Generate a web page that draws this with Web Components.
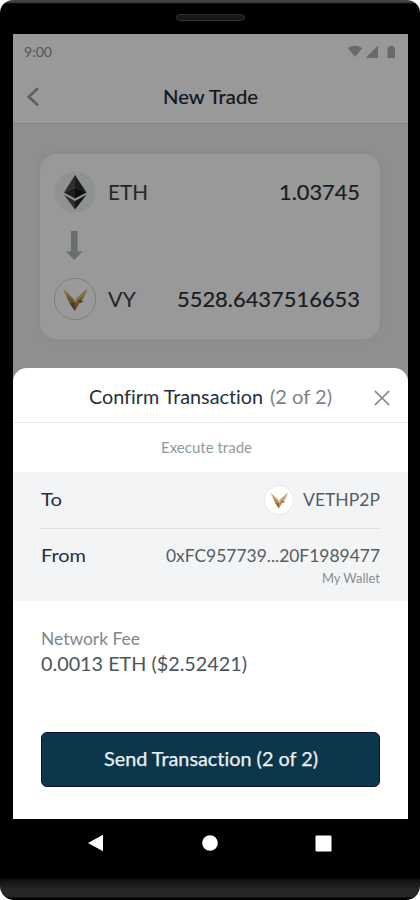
<!DOCTYPE html>
<html lang="en">
<head>
<meta charset="utf-8">
<title>New Trade</title>
<style>
body{
    margin: 0;
    background-color: #fff;
    font-family: Lato, 'Open Sans', sans-serif;
    font-variant-ligatures: none;
}
</style>
</head>
<body>

<phone-frame>
    <status-bar time="9:00"></status-bar>
    <nav-header>New Trade</nav-header>
    <trade-card>
        <trade-row name="ETH" amount="1.03745" name-width="40" amount-width="81"><coin-icon type="eth" size="42"></coin-icon></trade-row>
        <trade-arrow></trade-arrow>
        <trade-row name="VY" amount="5528.6437516653" name-width="28" amount-width="183"><coin-icon type="vy" size="42" dim></coin-icon></trade-row>
    </trade-card>
    <confirm-sheet></confirm-sheet>
</phone-frame>

<script>
function make(html){
    const t = document.createElement('template');
    t.innerHTML = html;
    return t;
}

// text line stretched to a fixed width
const fit = make(`
<style>
:host{display:block; flex:none; white-space:nowrap; text-align:left;}
span{display:inline-block; vertical-align:top; transform-origin:0 0;}
</style>
<span><slot></slot></span>`);

class FitText extends HTMLElement{
    constructor(){
        super();
        this.attachShadow({mode:'open'});
        this.shadowRoot.appendChild(fit.content.cloneNode(true));
    }
    connectedCallback(){
        const w = parseFloat(this.getAttribute('w'));
        const span = this.shadowRoot.querySelector('span');
        const scale = w / span.getBoundingClientRect().width;
        span.style.transform = `scaleX(${scale.toFixed(4)})`;
        this.style.width = w + 'px';
    }
}

const coin = make(`
<style>
:host{display:block; flex:none;}
svg{display:block;}
</style>
<svg viewBox="0 0 42 42"></svg>`);

const coinShapes = {
    eth: `<circle cx="21" cy="21" r="20.5" fill="#8e9293"/>
        <path d="M21 4 10 21.500 21 16.800z" fill="#2e2e2e"/>
        <path d="M21 4 32.500 21.500 21 16.800z" fill="#1b1b1b"/>
        <path d="M10 21.500 21 16.800V27.500z" fill="#1c1c1c"/>
        <path d="M32.500 21.500 21 16.800V27.500z" fill="#0c0c0c"/>
        <path d="M10 23.800 21 30V38.500z" fill="#303030"/>
        <path d="M32.500 23.800 21 30V38.500z" fill="#161616"/>`,
    vy: `<path d="M9.300 11 20.500 21.500 21 33 16 26z" fill="var(--a)"/>
        <path d="M12.500 17.500 20.700 23.500 21 33 16 26z" fill="var(--b)"/>
        <path d="M33.300 11 22 20.800 20.800 33 26.500 23.500 30 19z" fill="var(--b)"/>
        <path d="M33.300 11 22 20.800 21.800 24 30.500 17.500z" fill="var(--c)"/>
        <path d="M16 25.500 21 33 21.600 24.500z" fill="var(--d)"/>
        <path d="M24.500 22 29.800 23 26 25.200z" fill="var(--d)"/>`
};

class CoinIcon extends HTMLElement{
    constructor(){
        super();
        this.attachShadow({mode:'open'});
        this.shadowRoot.appendChild(coin.content.cloneNode(true));
        const svg = this.shadowRoot.querySelector('svg');
        const size = this.getAttribute('size');
        const type = this.getAttribute('type');
        const dim = this.hasAttribute('dim');
        svg.setAttribute('width', size);
        svg.setAttribute('height', size);
        let ring = '';
        if(type === 'vy'){
            ring = dim ? '<circle cx="21" cy="21" r="20.6" fill="#9a9a9a" stroke="#7f7d79" stroke-width=".9"/>'
                       : '<circle cx="21" cy="21" r="20.4" fill="#fff" stroke="#e6e3df" stroke-width="1.1"/>';
            svg.style.cssText = dim ? '--a:#7d6636;--b:#66522c;--c:#81704a;--d:#4b3b20'
                                    : '--a:#c9a870;--b:#b5925a;--c:#ccb084;--d:#8f6b3c';
        }
        svg.innerHTML = ring + coinShapes[type];
    }
}

const status = make(`
<style>
:host{
    display:flex;
    align-items:center;
    justify-content:space-between;
    height:36px;
    padding:0 12px 0 11px;
    background-color:#999;
    color:#555;
    font-size:14px;
    line-height:36px;
}
svg{display:block;}
</style>
<fit-text w="28"></fit-text>
<svg width="48" height="14" viewBox="0 0 48 14" fill="#696969">
    <path d="M0 3.200C4-.1 10-.1 14.200 3.200L7.100 12z"/>
    <path d="M30 .5V13H17.700z"/>
    <path d="M39.500 2.200h2V.7h3.500v1.500h2V13h-7.500z"/>
</svg>`);

class StatusBar extends HTMLElement{
    constructor(){
        super();
        this.attachShadow({mode:'open'});
        const root = status.content.cloneNode(true);
        root.querySelector('fit-text').textContent = this.getAttribute('time');
        this.shadowRoot.appendChild(root);
    }
}

const header = make(`
<style>
:host{
    display:grid;
    grid-template-columns:40px 1fr 40px;
    align-items:center;
    justify-items:center;
    height:53px;
    border-bottom:1px solid #868686;
    background-color:#999;
    color:#11151b;
    font-size:18.500px;
    -webkit-text-stroke:.2px;
    line-height:54px;
}
svg{display:block;}
</style>
<svg width="40" height="20" viewBox="0 0 40 20" fill="none" stroke="#5c5e60" stroke-width="2.600"><path d="M25 1.300 15.700 9.800 25 18.300"/></svg>
<fit-text w="95"></fit-text>`);

class NavHeader extends HTMLElement{
    constructor(){
        super();
        this.attachShadow({mode:'open'});
        const root = header.content.cloneNode(true);
        root.querySelector('fit-text').textContent = this.textContent;
        this.shadowRoot.appendChild(root);
    }
}

const card = make(`
<style>
:host{
    display:block;
    box-sizing:border-box;
    height:185px;
    margin:30px 28px 29px 27px;
    padding:17px 20px 0 14px;
    border-radius:16px;
    background-color:#999;
    box-shadow:0 0 9px rgb(0 0 0 / 0.05);
}
</style>
<slot></slot>`);

class TradeCard extends HTMLElement{
    constructor(){
        super();
        this.attachShadow({mode:'open'});
        this.shadowRoot.appendChild(card.content.cloneNode(true));
    }
}

const row = make(`
<style>
:host{
    display:flex;
    align-items:center;
    height:42px;
    line-height:42px;
    font-size:20.500px;
    color:#22272c;
}
#name{margin-left:12px;}
#amount{margin-left:auto; -webkit-text-stroke:.2px; color:#171c24;}
fit-text{height:42px;}
</style>
<slot></slot>
<fit-text id="name"></fit-text>
<fit-text id="amount"></fit-text>`);

class TradeRow extends HTMLElement{
    constructor(){
        super();
        this.attachShadow({mode:'open'});
        const root = row.content.cloneNode(true);
        for(const id of ['name','amount']){
            const el = root.querySelector('#' + id);
            el.textContent = this.getAttribute(id);
            el.setAttribute('w', this.getAttribute(id + '-width'));
        }
        this.shadowRoot.appendChild(root);
    }
}

const arrow = make(`
<style>
:host{display:flex; align-items:center; height:65px; padding-left:11px;}
</style>
<svg width="18" height="29" viewBox="0 0 18 29" fill="#696e6f"><path d="M6 0h6.500v20.500H17.500L9.200 29 1 20.500H6z"/></svg>`);

class TradeArrow extends HTMLElement{
    constructor(){
        super();
        this.attachShadow({mode:'open'});
        this.shadowRoot.appendChild(arrow.content.cloneNode(true));
    }
}

const sheet = make(`
<style>
:host{
    display:flex;
    flex-direction:column;
    flex:1;
    border-radius:14px 14px 0 0;
    background-color:#fff;
    font-size:17.500px;
    color:#25303a;
}
.title{
    display:grid;
    grid-template-columns:1fr auto;
    align-items:center;
    height:54px;
    padding:0 18px 0 76px;
    border-bottom:1px solid #e6e8e9;
    line-height:54px;
    font-size:18.500px;
}
.title div{display:flex; gap:7px; padding-top:2px;}
.title svg{margin-top:3px;}
.grey{color:#7b828a;}
.note{
    display:flex;
    justify-content:center;
    height:49px;
    padding-right:8px;
    line-height:50px;
    font-size:14.500px;
    color:#93989b;
}
.info{
    height:129px;
    box-sizing:border-box;
    padding:0 28px;
    background-color:#f2f4f5;
}
.line{
    display:flex;
    justify-content:space-between;
    box-sizing:border-box;
    height:57px;
    line-height:54px;
}
.line:first-child{border-bottom:1px solid #dddfe1; line-height:56px;}
.to{display:flex; align-items:center; gap:9px; font-size:17px; color:#555c62;}
.to fit-text{height:56px;}
.from{
    display:flex;
    flex-direction:column;
    align-items:flex-end;
    font-size:17px;
    color:#555c62;
}
.from fit-text + fit-text{margin-top:-12px; line-height:16px; font-size:12.500px; color:#888e92;}
.fee{
    display:flex;
    flex-direction:column;
    padding:26px 28px 0;
    line-height:25px;
}
.fee fit-text{font-size:18.500px; color:#4c545b;}
.fee .grey{font-size:16.500px; color:#81868a;}
button{
    display:flex;
    align-items:center;
    justify-content:center;
    height:55px;
    margin:55px 28px 0;
    border:1px solid #081238;
    border-radius:6px;
    background-color:#0b364b;
    font:18.500px/53px Lato, 'Open Sans', sans-serif;
    font-variant-ligatures:none;
    -webkit-text-stroke:.25px;
    color:#eceff1;
}
</style>
<div class="title">
    <div><fit-text w="174">Confirm Transaction</fit-text><fit-text class="grey" w="62">(2 of 2)</fit-text></div>
    <svg width="16" height="16" viewBox="0 0 16 16" stroke="#8b8d8f" stroke-width="1.700"><path d="M.8.8 15.200 15.200M15.200.8.8 15.200"/></svg>
</div>
<div class="note"><fit-text w="91">Execute trade</fit-text></div>
<div class="info">
    <div class="line">
        <fit-text w="21">To</fit-text>
        <div class="to"><coin-icon type="vy" size="30"></coin-icon><fit-text w="77">VETHP2P</fit-text></div>
    </div>
    <div class="line">
        <fit-text w="45">From</fit-text>
        <div class="from"><fit-text w="214">0xFC957739...20F1989477</fit-text><fit-text w="58">My Wallet</fit-text></div>
    </div>
</div>
<div class="fee">
    <fit-text class="grey" w="99">Network Fee</fit-text>
    <fit-text w="206">0.0013 ETH ($2.52421)</fit-text>
</div>
<button><fit-text w="214">Send Transaction (2 of 2)</fit-text></button>`);

class ConfirmSheet extends HTMLElement{
    constructor(){
        super();
        this.attachShadow({mode:'open'});
        this.shadowRoot.appendChild(sheet.content.cloneNode(true));
    }
}

const phone = make(`
<style>
:host{
    display:flex;
    flex-direction:column;
    box-sizing:border-box;
    width:420px;
    height:900px;
    border-radius:13px 13px 14px 14px;
    overflow:hidden;
    background:linear-gradient(#444 0 2px, #000 4px 878px, #151515 881px, #262626 890px, #262626 897px, #000 898px);
}
.speaker{
    box-sizing:border-box;
    width:69px;
    height:7px;
    margin:14px auto 13px;
    border:1px solid #303030;
    border-radius:4px;
    background-color:#181818;
}
.screen{
    display:flex;
    flex-direction:column;
    box-sizing:border-box;
    width:395px;
    height:785px;
    margin-left:13px;
    background-color:#8f8f8f;
}
.buttons{
    display:flex;
    justify-content:space-between;
    align-items:center;
    height:18px;
    margin:15px 88px 0 87px;
}
svg{display:block;}
</style>
<div class="speaker"></div>
<div class="screen"><slot></slot></div>
<div class="buttons">
    <svg width="17" height="18" viewBox="0 0 17 18" fill="#fff"><path d="M1 9 16 .8V17.200z"/></svg>
    <svg width="16" height="16" viewBox="0 0 16 16" fill="#fff"><circle cx="8" cy="8" r="7.800"/></svg>
    <svg width="17" height="17" viewBox="0 0 17 17" fill="#fff"><rect x=".5" y=".5" width="16" height="16" rx="1.200"/></svg>
</div>`);

class PhoneFrame extends HTMLElement{
    constructor(){
        super();
        this.attachShadow({mode:'open'});
        this.shadowRoot.appendChild(phone.content.cloneNode(true));
    }
}

window.customElements.define('phone-frame',PhoneFrame);
window.customElements.define('status-bar',StatusBar);
window.customElements.define('nav-header',NavHeader);
window.customElements.define('trade-card',TradeCard);
window.customElements.define('trade-row',TradeRow);
window.customElements.define('trade-arrow',TradeArrow);
window.customElements.define('coin-icon',CoinIcon);
window.customElements.define('confirm-sheet',ConfirmSheet);
window.customElements.define('fit-text',FitText);
</script>
</body>
</html>
